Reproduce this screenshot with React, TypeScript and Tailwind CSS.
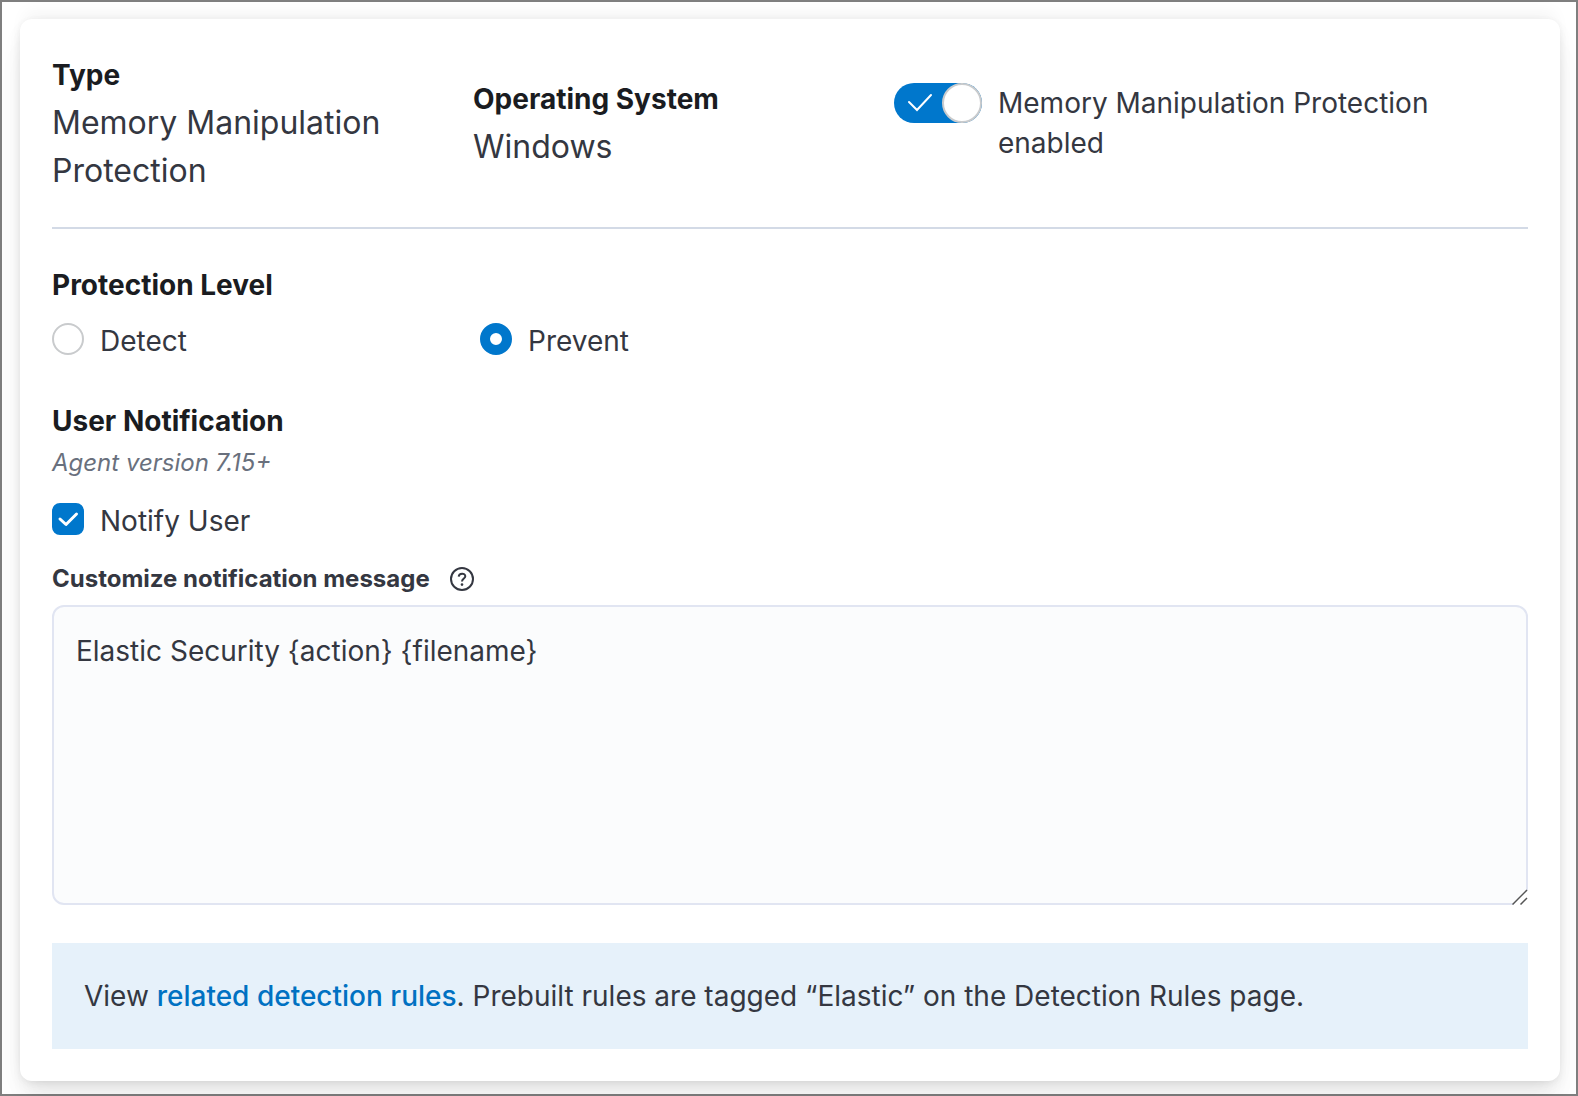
import React, { useState } from "react";

const heading = "text-[28px] leading-12 font-bold text-[#1a1c21]";
const radio =
  "mt-0.5 h-8 w-8 appearance-none rounded-full border-2 border-[#c9cbcd] bg-white checked:border-[10px] checked:border-[#0077cc]";

export default function App() {
  const [on, setOn] = useState(true);
  const [level, setLevel] = useState("prevent");
  const [notify, setNotify] = useState(true);
  const [msg, setMsg] = useState("Elastic Security {action} {filename}");
  return (
    <div className="min-h-screen border-2 border-[#7f7f7f] bg-white pt-[17px] pr-4 pb-3 pl-[18px] font-['Inter',sans-serif] text-[28px] leading-10 text-[#343741]">
      <main className="rounded-xl bg-white p-8 shadow-[0_2px_8px_-2px_rgba(0,0,0,0.08),0_5px_16px_-2px_rgba(0,0,0,0.06),0_11px_24px_-2px_rgba(0,0,0,0.05),0_30px_30px_-2px_rgba(0,0,0,0.04),0_-12px_16px_-4px_rgba(0,0,0,0.04)]">
        <header className="flex items-center border-b-2 border-[#d3dae6] pb-8">
          <section className="w-[421px] pr-8">
            <h2 className={heading}>Type</h2>
            <p className="text-[32px] leading-12">Memory Manipulation Protection</p>
          </section>
          <section className="w-[421px]">
            <h2 className={heading}>Operating System</h2>
            <p className="text-[32px] leading-12">Windows</p>
          </section>
          <div className="flex flex-1 items-start gap-4">
            <button
              type="button"
              role="switch"
              aria-checked={on}
              aria-labelledby="switch-label"
              onClick={() => setOn(!on)}
              className="flex h-10 w-[88px] shrink-0 items-center justify-between rounded-full bg-[#0077cc] pl-3"
            >
              <svg className="h-7 w-7" viewBox="0 0 28 28" fill="none" stroke="white" strokeWidth="2" strokeLinecap="round">
                <path d="M3 13 L11 21 L25 6" />
              </svg>
              <span className="h-10 w-10 rounded-full border-2 border-[#c9cbcd] bg-white" />
            </button>
            <span id="switch-label" className="max-w-[480px]">Memory Manipulation Protection enabled</span>
          </div>
        </header>
        <fieldset className="mt-8">
          <legend className={heading}>Protection Level</legend>
          <div className="mt-3 flex">
            <label className="flex w-[428px] items-start gap-4">
              <input type="radio" name="level" checked={level === "detect"} onChange={() => setLevel("detect")} className={radio} />
              Detect
            </label>
            <label className="flex items-start gap-4">
              <input type="radio" name="level" checked={level === "prevent"} onChange={() => setLevel("prevent")} className={radio} />
              Prevent
            </label>
          </div>
        </fieldset>
        <h2 className={`${heading} mt-9`}>User Notification</h2>
        <p className="text-2xl leading-9 text-[#69707d] italic">Agent version 7.15+</p>
        <label className="mt-5 flex items-start gap-4">
          <span className="mt-0.5 grid">
            <input
              type="checkbox"
              checked={notify}
              onChange={() => setNotify(!notify)}
              className="col-start-1 row-start-1 h-8 w-8 appearance-none rounded-lg border-2 border-[#c9cbcd] checked:border-[#0077cc] checked:bg-[#0077cc]"
            />
            {notify && (
              <svg className="pointer-events-none col-start-1 row-start-1 h-8 w-8" viewBox="0 0 32 32" fill="none" stroke="white" strokeWidth="3" strokeLinecap="round" strokeLinejoin="round">
                <path d="M8 16 L14 21.5 L24.5 11" />
              </svg>
            )}
          </span>
          Notify User
        </label>
        <div className="mt-5 flex items-center gap-5">
          <label htmlFor="message" className="text-2xl leading-9 font-bold">Customize notification message</label>
          <svg className="h-6 w-6" viewBox="0 0 24 24" fill="none" stroke="#343741" strokeWidth="2">
            <circle cx="12" cy="12" r="11" />
            <path d="M8.7 9.6 C9 5.8 15.3 5.8 15.3 9.2 C15.3 11.6 12 11.4 12 14.6" />
            <circle cx="12" cy="17.6" r="1.3" fill="#343741" stroke="none" />
          </svg>
        </div>
        <div className="relative mt-2">
          <textarea
            id="message"
            value={msg}
            onChange={(e) => setMsg(e.target.value)}
            className="block h-[300px] w-full resize-y rounded-xl border-2 border-[#e1e5f2] bg-[#fbfcfd] px-[22px] py-6 [&::-webkit-resizer]:bg-transparent"
          />
          <svg className="pointer-events-none absolute right-0 bottom-0 h-4 w-4" viewBox="0 0 16 16" fill="none">
            <path d="M1 16 L16 1 V16 Z" fill="white" />
            <path d="M0.5 15.5 L15 1 M8.5 15.5 L15 9" stroke="#555" strokeWidth="1.5" />
          </svg>
        </div>
        <aside className="mt-[38px] bg-[#e6f1fa] p-8 leading-[42px]">
          View <a href="#rules" className="font-medium text-[#0071c2]">related detection rules</a>. Prebuilt rules are tagged “Elastic” on the Detection Rules page.
        </aside>
      </main>
    </div>
  );
}
